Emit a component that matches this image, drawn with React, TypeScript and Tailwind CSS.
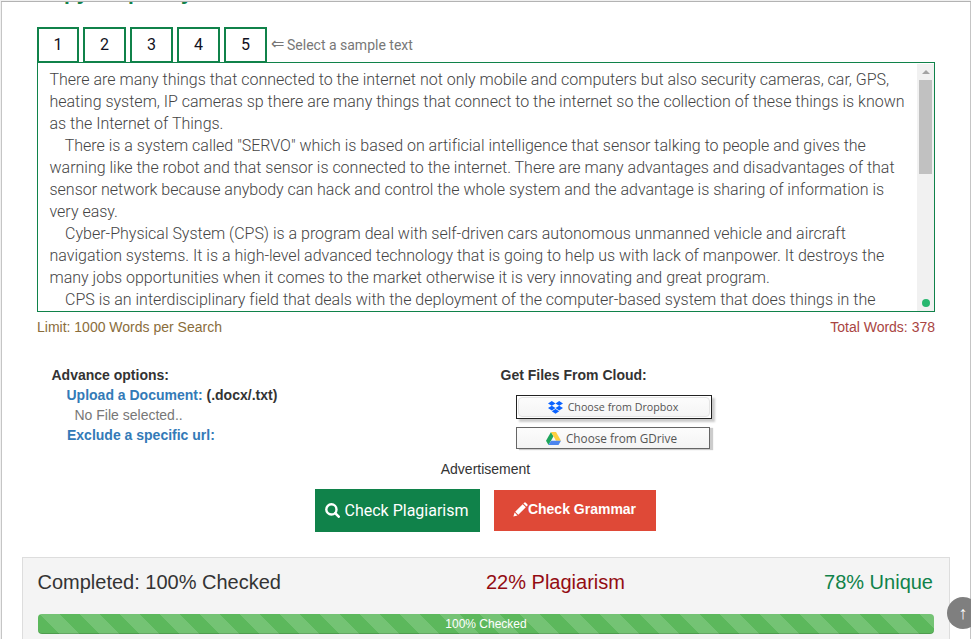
const samples = [1, 2, 3, 4, 5];

const essay = [
  "There are many things that connected to the internet not only mobile and computers but also security cameras, car, GPS,",
  "heating system, IP cameras sp there are many things that connect to the internet so the collection of these things is known",
  "as the Internet of Things.",
  "    There is a system called \"SERVO\" which is based on artificial intelligence that sensor talking to people and gives the",
  "warning like the robot and that sensor is connected to the internet. There are many advantages and disadvantages of that",
  "sensor network because anybody can hack and control the whole system and the advantage is sharing of information is",
  "very easy.",
  "    Cyber-Physical System (CPS) is a program deal with self-driven cars autonomous unmanned vehicle and aircraft",
  "navigation systems. It is a high-level advanced technology that is going to help us with lack of manpower. It destroys the",
  "many jobs opportunities when it comes to the market otherwise it is very innovating and great program.",
  "    CPS is an interdisciplinary field that deals with the deployment of the computer-based system that does things in the",
];

function DropboxIcon() {
  return (
    <svg width="15" height="13" viewBox="0 0 15 13" fill="#0a62ff">
      <path d="M3.8 0 7.5 2.4 3.8 4.8 0 2.4ZM11.2 0 15 2.4 11.2 4.8 7.5 2.4ZM0 7.1 3.8 4.8 7.5 7.1 3.8 9.5ZM11.2 4.8 15 7.1 11.2 9.5 7.5 7.1ZM3.8 10.3 7.5 7.9 11.2 10.3 7.5 12.7Z" />
    </svg>
  );
}

function DriveIcon() {
  return (
    <svg width="15" height="13" viewBox="0 0 15 13">
      <path d="M5 0 0 8.7 2.5 13 7.5 4.3Z" fill="#1da55c" />
      <path d="M5 0H10L15 8.7H10Z" fill="#fdcf3f" />
      <path d="M5 8.7H15L12.5 13H2.5Z" fill="#4b84ee" />
    </svg>
  );
}

function SearchIcon() {
  return (
    <svg width="15" height="15" viewBox="0 0 15 15" fill="none" stroke="currentColor">
      <circle cx="6.4" cy="6.4" r="5.1" strokeWidth="2.4" />
      <path d="M10.2 10.2 13.7 13.7" strokeWidth="2.6" strokeLinecap="round" />
    </svg>
  );
}

function PencilIcon() {
  return (
    <svg width="15" height="15" viewBox="0 0 15 15" fill="currentColor">
      <path d="M11.2 .7Q12 0 12.8 .7L14.3 2.2Q15 3 14.3 3.8L13.5 4.6 10.4 1.5ZM9.7 2.2 12.8 5.3 5.3 12.8 2.2 9.7ZM1.6 10.5 4.5 13.4 .4 14.6Z" />
    </svg>
  );
}

export default function App() {
  return (
    <div className="relative flex h-[639px] w-[971px] flex-col overflow-hidden border-l border-[#f1f1f1] bg-white font-['Liberation_Sans',Arial,sans-serif] text-sm leading-5 text-[#333]">
      <div className="h-[2px] shrink-0 border-t border-[#f0f0f0] bg-[#b3b3b3]" />
      <div className="flex h-[637px] flex-col border-x border-[#c5c5c5]">
        <div className="flex h-[25px] shrink-0 items-start overflow-hidden pl-[34px]">
          <h2 className="-mt-[21px] flex h-6 text-[21px] leading-6 font-bold whitespace-nowrap text-[#10824a]">
            <span className="w-[92px]">Copy &amp;</span>
            <span className="w-[53px] tracking-tight">paste</span>
            <span>your</span>
          </h2>
        </div>

        <div className="flex h-[35px] shrink-0 items-center pl-[35px]">
          <div className="flex gap-[4px]">
            {samples.map((n) => (
              <button key={n} className="h-9 w-[43px] border-2 border-[#10824a] bg-white font-[Roboto,sans-serif] text-base text-[#112] first:w-[42px]">
                {n}
              </button>
            ))}
          </div>
          <span className="ml-[4px] flex items-center font-[Roboto,sans-serif] text-sm text-[#777]">
            <span className="mr-[3px] w-[13px] font-['DejaVu_Sans',sans-serif] text-[16px]">⇐</span>Select a sample text
          </span>
        </div>

        <div className="mr-[35px] ml-[35px] flex h-[250px] shrink-0 overflow-hidden border border-[#10824a]">
          <div className="min-w-0 flex-1 pt-[6px] pl-[11.5px] font-[Roboto,sans-serif] text-base leading-[22px] font-light tracking-[-0.006px] whitespace-pre text-[#444]">
            {essay.map((line) => (
              <div key={line} className="h-[22px]">{line}</div>
            ))}
          </div>
          <div className="mt-px flex w-[17px] shrink-0 flex-col items-center bg-[#f1f1f1]">
            <div className="mt-[6px] h-0 w-0 border-x-[4px] border-b-[4px] border-x-transparent border-b-[#a3a3a3]" />
            <div className="mt-[6px] h-[94px] w-[13px] bg-[#c1c1c1]" />
            <div className="mt-[125px] h-2 w-2 shrink-0 rounded-full bg-[#28b76f]" />
          </div>
        </div>

        <div className="mr-[35px] ml-[35px] flex shrink-0 justify-between pt-[5px]">
          <span className="text-[#8a6d3b]">Limit: 1000 Words per Search</span>
          <span className="text-[#a94442]">Total Words: 378</span>
        </div>

        <div className="mt-[28px] flex h-[94px] shrink-0 pl-[49.5px]">
          <div className="w-[449px] font-bold">
            <p>Advance options:</p>
            <p className="pl-[15px]"><span className="text-[#337ab7]">Upload a Document:</span> (.docx/.txt)</p>
            <p className="pl-[23px] font-normal text-[#777]">No File selected..</p>
            <p className="pl-[15.5px] text-[#337ab7]">Exclude a specific url:</p>
          </div>
          <div>
            <p className="font-bold">Get Files From Cloud:</p>
            <div className="mt-[10px] ml-[15.5px] flex flex-col items-start gap-[8px] font-['Open_Sans',sans-serif] text-[#555]">
              <button className="h-6 w-[196px] border border-[#222] bg-white p-px text-[10.7px] shadow-[3px_3px_2px_#ccc]">
                <span className="flex h-full items-center justify-center gap-[5px] rounded-sm border border-[#e4e4e4] bg-linear-to-b from-[#fcfcfc] to-[#f5f5f5] pr-[2px]"><DropboxIcon />Choose from Dropbox</span>
              </button>
              <button className="flex h-[22px] w-[194px] items-center justify-center gap-[5px] border border-[#666] bg-linear-to-b from-[#fcfcfc] to-[#f4f4f4] pr-[3px] text-[11.75px] shadow-[3px_1px_1px_#ccc]"><DriveIcon />Choose from GDrive</button>
            </div>
          </div>
        </div>

        <p className="shrink-0 pr-px text-center">Advertisement</p>

        <div className="mt-[10px] flex h-[43px] shrink-0 justify-center gap-[14px] pr-[2px]">
          <button className="flex w-[165px] items-center justify-center gap-1 bg-[#10824a] font-[Roboto,sans-serif] text-base text-white">
            <SearchIcon />Check Plagiarism
          </button>
          <button className="mt-px flex h-[41px] w-[162px] items-center justify-center bg-[#df4937] pb-[3px] font-bold text-white">
            <PencilIcon />Check Grammar
          </button>
        </div>

        <div className="mt-[25px] mr-[20px] ml-[20px] h-[90px] shrink-0 border border-[#ddd] bg-[#f4f4f4] px-[15px] pt-[13px]">
          <div className="flex justify-between text-xl leading-[22px]">
            <span className="w-[300px] -indent-[0.5px]">Completed: 100% Checked</span>
            <span className="w-[296px] pl-[148px] whitespace-nowrap text-[#930c12]">22% Plagiarism</span>
            <span className="w-[300px] pr-px text-right text-[#10824a]">78% Unique</span>
          </div>
          <div className="mt-[21px] h-5 rounded-sm bg-[#5cb85c] bg-[linear-gradient(45deg,rgba(255,255,255,.15)_25%,transparent_25%,transparent_50%,rgba(255,255,255,.15)_50%,rgba(255,255,255,.15)_75%,transparent_75%,transparent)] bg-size-[40px_40px] bg-position-[2px_0px] text-center text-xs leading-5 text-white shadow-[inset_0_-1px_0_rgba(0,0,0,0.15)]">
            100% Checked
          </div>
        </div>
      </div>

      <button className="absolute top-[597px] left-[946px] h-8 w-8 rounded-full bg-[#7f7f7f] font-['Liberation_Sans',sans-serif] text-lg leading-7 text-white">↑</button>
    </div>
  );
}
